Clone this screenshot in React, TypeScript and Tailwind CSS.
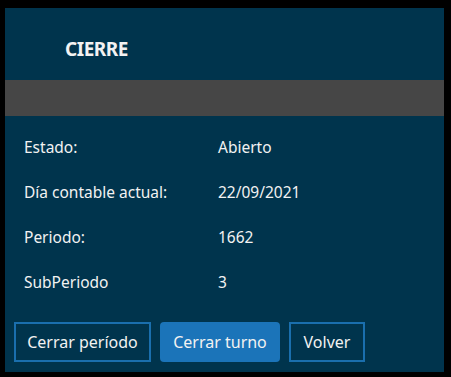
const rows = [
  { label: "Estado:", value: "Abierto" },
  { label: "Día contable actual:", value: "22/09/2021" },
  { label: "Periodo:", value: "1662" },
  { label: "SubPeriodo", value: "3" },
];

export default function App() {
  return (
    <div
      className="w-[451px] h-[377px] bg-black overflow-hidden flex flex-col"
      style={{ fontFamily: '"Noto Sans", "Open Sans", sans-serif' }}
    >
      {/* dialog over the dimmed page */}
      <div className="ml-[5px] mt-[8px] w-[439px] h-[364px] bg-[#00344d] text-[#f2f2f2] flex flex-col">
        <div className="h-[72px] flex items-center pl-[60px] pt-[10px]">
          <h1 className="text-[19px] font-bold tracking-tight">CIERRE</h1>
        </div>
        <div className="h-[36px] bg-[#464646]" />
        <div className="flex flex-col pt-[9px] pl-[19px] text-[15.5px]">
          {rows.map((r) => (
            <div key={r.label} className="flex items-center h-[45px]">
              <span className="w-[194px]">{r.label}</span>
              <span>{r.value}</span>
            </div>
          ))}
        </div>
        <div className="flex gap-[9px] pl-[9px] mt-[17px] text-[16px]">
          <button className="h-[40px] w-[137px] border-2 border-[#1a6fae] bg-transparent">
            Cerrar período
          </button>
          <button className="h-[40px] w-[120px] rounded-sm bg-[#1b74b9]">
            Cerrar turno
          </button>
          <button className="h-[40px] w-[76px] border-2 border-[#1a6fae] bg-transparent">
            Volver
          </button>
        </div>
      </div>
    </div>
  );
}
